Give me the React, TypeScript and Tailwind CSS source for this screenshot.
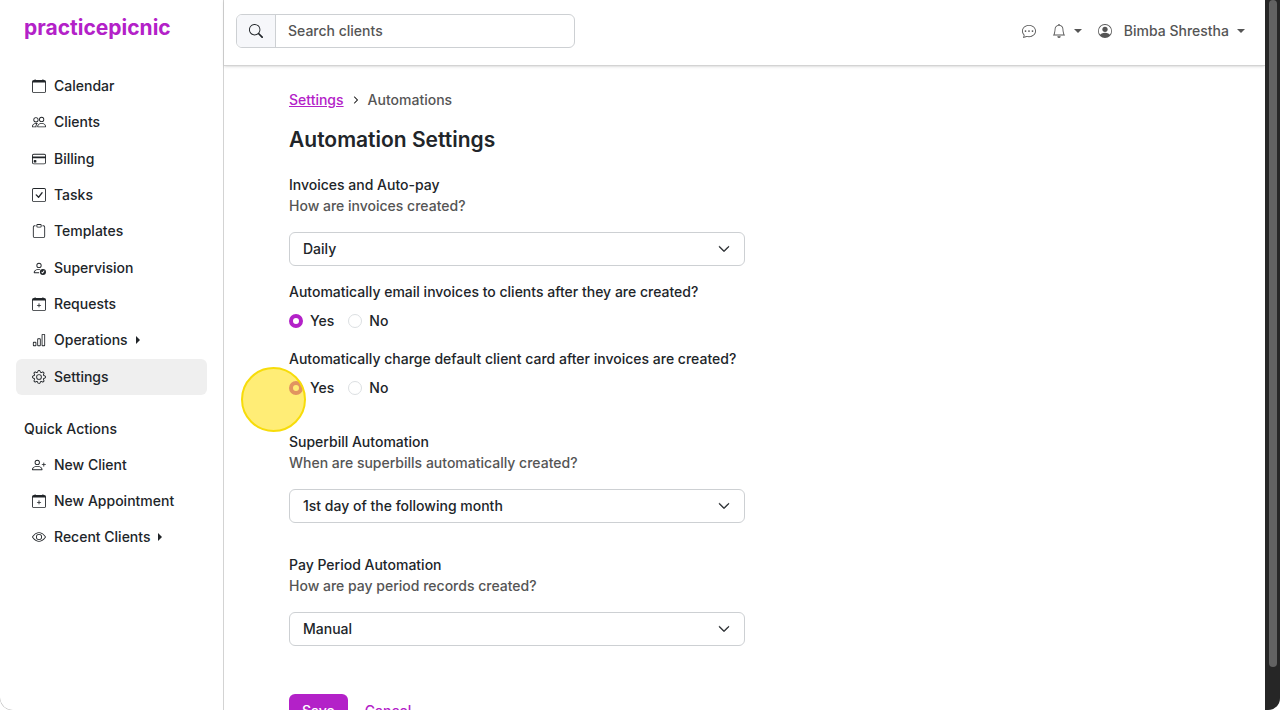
import type { IconType } from "react-icons"
import type { ReactNode } from "react"
import {
  BsBarChart,
  BsBell,
  BsCalendar,
  BsCalendarPlus,
  BsChatDots,
  BsCheckSquare,
  BsChevronDown,
  BsChevronRight,
  BsClipboard,
  BsCreditCard,
  BsEye,
  BsGear,
  BsPeople,
  BsPersonCheck,
  BsPersonCircle,
  BsPersonPlus,
  BsSearch,
} from "react-icons/bs"

type NavEntry = { label: string; icon: IconType; expandable?: boolean; active?: boolean }

const mainNav: NavEntry[] = [
  { label: "Calendar", icon: BsCalendar },
  { label: "Clients", icon: BsPeople },
  { label: "Billing", icon: BsCreditCard },
  { label: "Tasks", icon: BsCheckSquare },
  { label: "Templates", icon: BsClipboard },
  { label: "Supervision", icon: BsPersonCheck },
  { label: "Requests", icon: BsCalendarPlus },
  { label: "Operations", icon: BsBarChart, expandable: true },
  { label: "Settings", icon: BsGear, active: true },
]

const quickActions: NavEntry[] = [
  { label: "New Client", icon: BsPersonPlus },
  { label: "New Appointment", icon: BsCalendarPlus },
  { label: "Recent Clients", icon: BsEye, expandable: true },
]

function CaretDown() {
  return <span aria-hidden="true" className="border-x-4 border-t-4 border-x-transparent border-t-current" />
}

function CaretRight() {
  return <span aria-hidden="true" className="border-y-4 border-l-4 border-y-transparent border-l-current" />
}

function NavItem({ label, icon: Icon, expandable, active }: NavEntry) {
  return (
    <a
      href="#"
      className={`flex min-h-9 items-center gap-2 rounded-md px-4 ${active ? "bg-[#efefef]" : ""}`}
    >
      <Icon className="size-3.5 shrink-0" />
      <span>{label}</span>
      {expandable && <CaretRight />}
    </a>
  )
}

function Sidebar() {
  return (
    <aside className="w-56 shrink-0 border-r border-[#d3d3d3] px-4 pt-3">
      <a href="#" className="block px-2 text-[21px] leading-8 font-bold text-[#b321c8]">
        practicepicnic
      </a>
      <nav className="mt-6 grid h-[327px] auto-rows-fr">
        {mainNav.map((item) => (
          <NavItem key={item.label} {...item} />
        ))}
      </nav>
      <h2 className="mt-6 px-2 leading-5">Quick Actions</h2>
      <nav className="mt-2 grid">
        {quickActions.map((item) => (
          <NavItem key={item.label} {...item} />
        ))}
      </nav>
    </aside>
  )
}

function TopBar() {
  return (
    <header className="relative flex h-[66px] shrink-0 items-start justify-between border-b border-[#d3d3d3] pt-3.5 pr-5 pl-3 shadow-sm">
      <div className="flex h-[34px] w-[339px] overflow-hidden rounded-md border border-[#cdd0d3]">
        <button
          type="button"
          aria-label="Search"
          className="flex w-[39px] items-center justify-center border-r border-[#cdd0d3] bg-[#f6f7fa]"
        >
          <BsSearch className="size-3.5" />
        </button>
        <input
          type="search"
          aria-label="Search clients"
          placeholder="Search clients"
          className="min-w-0 flex-1 px-3 outline-none placeholder:text-[#555]"
        />
      </div>
      <div className="flex h-[34px] items-center gap-4 text-[#555]">
        <button type="button" aria-label="Messages">
          <BsChatDots className="size-3.5" />
        </button>
        <button type="button" aria-label="Notifications" className="flex items-center gap-2">
          <BsBell className="size-3.5" />
          <CaretDown />
        </button>
        <button type="button" className="flex items-center">
          <BsPersonCircle className="size-3.5" />
          <span className="mr-2 ml-3">Bimba Shrestha</span>
          <CaretDown />
        </button>
      </div>
    </header>
  )
}

function SelectSection(props: { id: string; title: string; hint: string; value: string }) {
  return (
    <section>
      <h2 className="leading-5">{props.title}</h2>
      <label htmlFor={props.id} className="block leading-[21px] text-[#555]">
        {props.hint}
      </label>
      <div className="relative mt-4">
        <select
          id={props.id}
          defaultValue={props.value}
          className="h-[34px] w-full appearance-none rounded-md border border-[#cdd0d3] bg-white px-[13px]"
        >
          <option>{props.value}</option>
        </select>
        <BsChevronDown className="pointer-events-none absolute top-[11px] right-[15px] size-3 stroke-1" />
      </div>
    </section>
  )
}

function RadioOption({ name, label, checked }: { name: string; label: string; checked?: boolean }) {
  return (
    <label className="flex items-center gap-[7px]">
      <input
        type="radio"
        name={name}
        defaultChecked={checked}
        className="size-3.5 appearance-none rounded-full border border-[#dcdfe2] checked:border-4 checked:border-[#b321c8]"
      />
      {label}
    </label>
  )
}

function YesNo({ name, question, children }: { name: string; question: string; children?: ReactNode }) {
  return (
    <fieldset>
      <legend className="leading-5 whitespace-nowrap">{question}</legend>
      <div className="relative mt-2 flex h-[22px] items-center gap-3.5">
        <RadioOption name={name} label="Yes" checked />
        <RadioOption name={name} label="No" />
        {children}
      </div>
    </fieldset>
  )
}

function AutomationForm() {
  return (
    <form className="w-[456px]">
      <SelectSection id="invoices" title="Invoices and Auto-pay" hint="How are invoices created?" value="Daily" />
      <div className="mt-4 grid gap-[17px]">
        <YesNo name="email" question="Automatically email invoices to clients after they are created?" />
        <YesNo name="charge" question="Automatically charge default client card after invoices are created?">
          <span className="pointer-events-none absolute -top-2.5 -left-12 size-[65px] rounded-full border-2 border-[#f7dc0a] bg-[#ffe11a]/60" />
        </YesNo>
      </div>
      <div className="mt-[33px] grid gap-8">
        <SelectSection
          id="superbill"
          title="Superbill Automation"
          hint="When are superbills automatically created?"
          value="1st day of the following month"
        />
        <SelectSection
          id="payperiod"
          title="Pay Period Automation"
          hint="How are pay period records created?"
          value="Manual"
        />
      </div>
      <div className="mt-12 flex gap-1">
        <button type="submit" className="h-[34px] rounded-md bg-[#b321c8] px-[13px] text-white">
          Save
        </button>
        <button type="button" className="h-[34px] px-[13px] text-[#b321c8]">
          Cancel
        </button>
      </div>
    </form>
  )
}

export default function App() {
  return (
    <div className="h-screen bg-white font-['Inter',sans-serif] text-sm font-medium text-[#212529]">
      <div className="flex h-full overflow-hidden rounded-b-xl bg-[#aaa]">
        <div className="flex min-w-0 flex-1 overflow-hidden rounded-bl-[13px] bg-white">
          <Sidebar />
          <div className="flex min-w-0 flex-1 flex-col">
            <TopBar />
            <main className="min-h-0 flex-1 overflow-hidden px-[65px] pt-6">
              <nav aria-label="Breadcrumb" className="flex items-center leading-5 text-[#555]">
                <a href="#" className="text-[#b321c8] underline">
                  Settings
                </a>
                <BsChevronRight className="mx-2 size-2 stroke-2" />
                <span>Automations</span>
              </nav>
              <h1 className="mt-3.5 mb-[19px] text-[21px] leading-8 font-semibold">Automation Settings</h1>
              <AutomationForm />
            </main>
          </div>
        </div>
        <div className="w-[15px] shrink-0 bg-[#262626] pr-[3px] pl-1">
          <div className="h-[94%] rounded-full bg-[#626262]" />
        </div>
      </div>
    </div>
  )
}
